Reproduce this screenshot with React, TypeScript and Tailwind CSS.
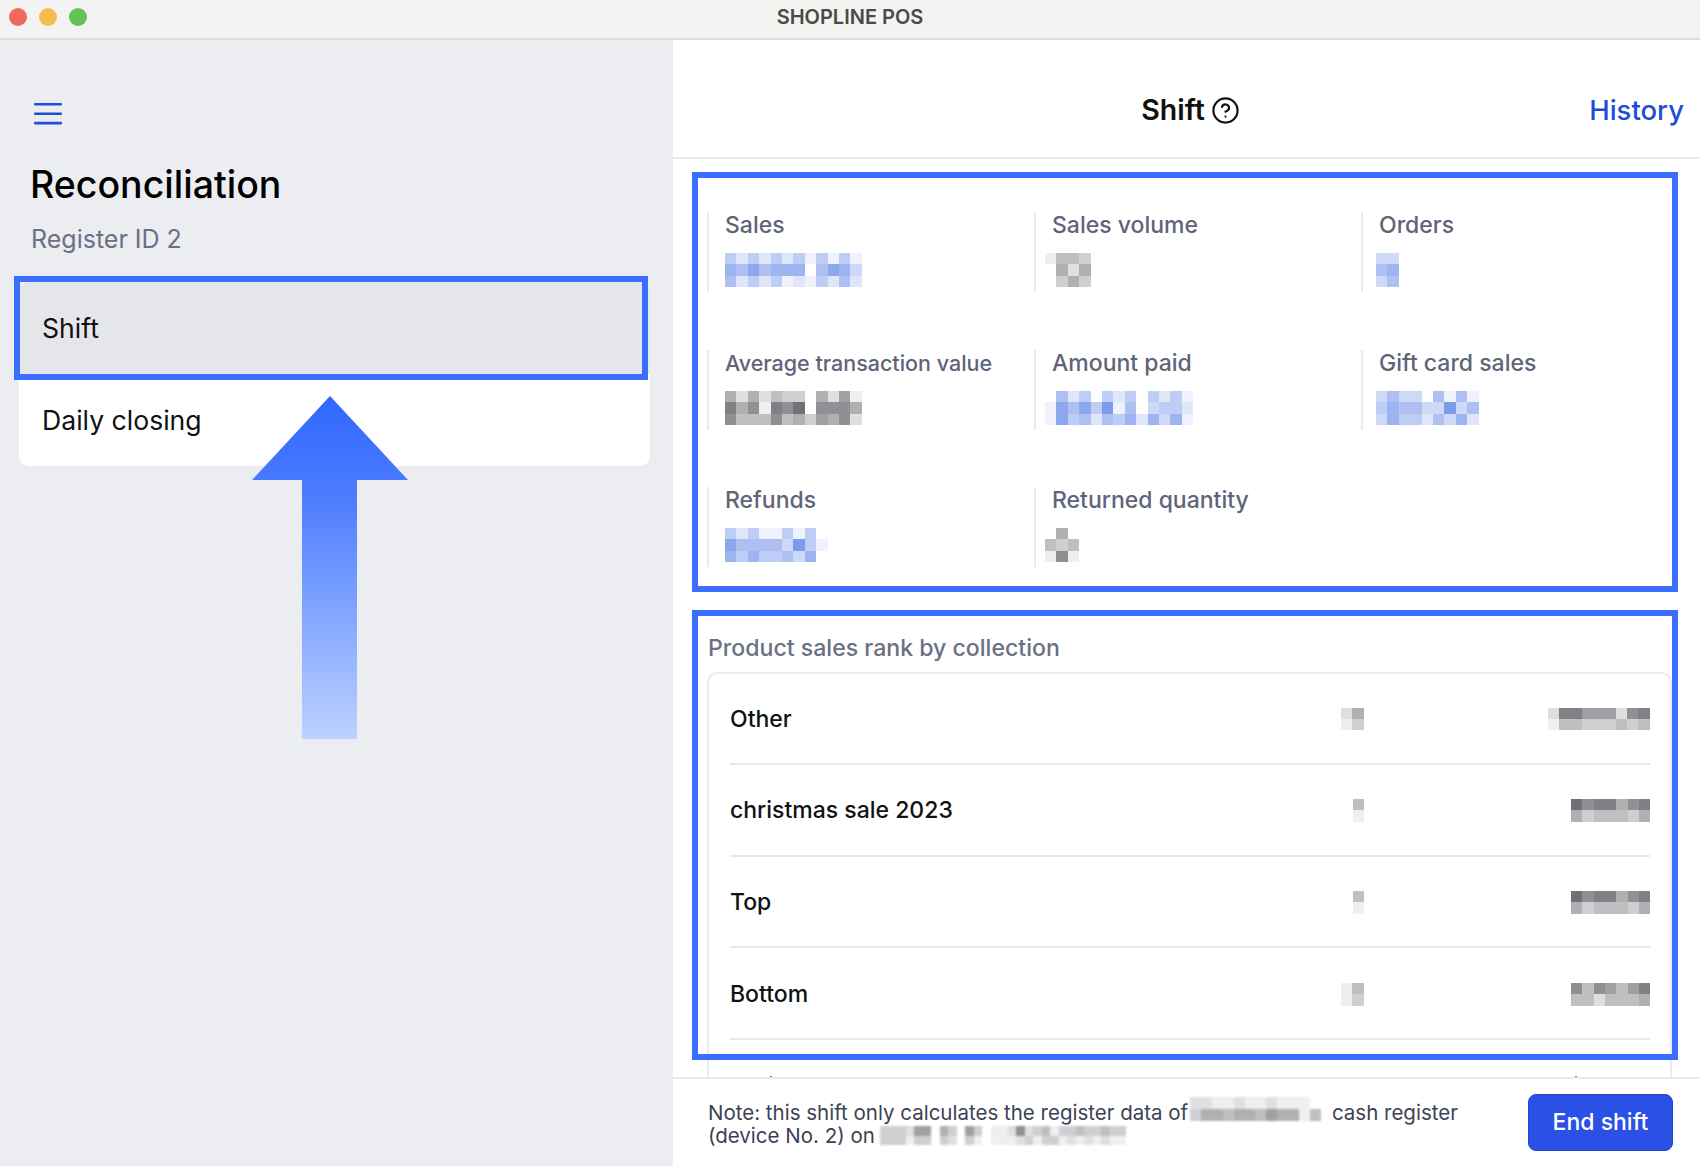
import { CircleHelp } from "lucide-react";

const ramps = {
  blue: [109, 142, 232],
  gray: [112, 112, 118],
};

type MosaicProps = {
  rows: string[];
  tone?: "blue" | "gray";
  cell?: number;
  cellH?: number;
  className?: string;
};

// pixelated block that hides a value in the screenshot
function Mosaic({ rows, tone = "gray", cell = 11.4, cellH, className = "" }: MosaicProps) {
  const [r, g, b] = ramps[tone];
  const h = cellH ?? cell;
  const mix = (c: number, d: number) => Math.round(255 - ((255 - c) * d) / 9);
  return (
    <svg
      width={rows[0].length * cell}
      height={rows.length * h}
      className={`shrink-0 blur-[0.4px] ${className}`}
      shapeRendering="crispEdges"
    >
      {rows.map((row, y) =>
        row.split("").map((d, x) => (
          <rect
            key={`${x}-${y}`}
            x={x * cell}
            y={y * h}
            width={cell}
            height={h}
            fill={`rgb(${mix(r, +d)},${mix(g, +d)},${mix(b, +d)})`}
          />
        ))
      )}
    </svg>
  );
}

type Stat = { label: string; rows: string[]; tone: "blue" | "gray"; shift: string; size?: string };

const stats: Stat[] = [
  { label: "Sales", tone: "blue", shift: "", rows: ["424242414141", "657566605763", "524241214252"] },
  { label: "Sales volume", tone: "gray", shift: "-ml-[7px]", rows: ["1443", "0525", "0353"] },
  { label: "Orders", tone: "blue", shift: "-ml-[3px]", rows: ["33", "56", "35"] },
  {
    label: "Average transaction value",
    tone: "gray",
    shift: "",
    size: "text-[21.5px]",
    rows: ["525243305261", "857187907775", "744474536572"],
  },
  { label: "Amount paid", tone: "blue", shift: "-ml-[7px]", rows: ["0524042404241", "1757481503442", "1745254626361"] },
  { label: "Gift card sales", tone: "blue", shift: "-ml-[3px]", rows: ["353305151", "465533835", "364425362"] },
  { label: "Refunds", tone: "blue", shift: "", rows: ["424114140", "755553841", "646445360"] },
  { label: "Returned quantity", tone: "gray", shift: "-ml-[7px]", rows: ["050", "434", "171"] },
];

const collections = [
  { name: "Other", qty: ["25", "13"], amount: ["288666278", "144333434"] },
  { name: "christmas sale 2023", qty: ["4", "1"], amount: ["9788578", "5344435"] },
  { name: "Top", qty: ["4", "1"], amount: ["9788578", "5344435"] },
  { name: "Bottom", qty: ["14", "13"], amount: ["7476468", "4424445"] },
];

export default function App() {
  return (
    <div className="relative flex h-[1166px] w-[1700px] flex-col overflow-hidden bg-white font-['Inter',sans-serif]">
      <div className="relative flex h-[40px] shrink-0 items-center justify-center border-b-2 border-[#dcdcdc] bg-[#f3f3f1] pb-[4px]">
        <div className="absolute left-[9px] top-[8px] flex gap-[12px]">
          <span className="h-[18px] w-[18px] rounded-full bg-[#ee6a5f]" />
          <span className="h-[18px] w-[18px] rounded-full bg-[#f5bd4f]" />
          <span className="h-[18px] w-[18px] rounded-full bg-[#61c454]" />
        </div>
        <span className="text-[20px] font-semibold text-[#4a4a4a]">SHOPLINE POS</span>
      </div>

      <div className="flex min-h-0 flex-1">
        <aside className="w-[673px] shrink-0 bg-[#ecedf1]">
          <svg width="28" height="22" viewBox="0 0 28 22" className="ml-[34px] mt-[63px] text-[#1d4ed8]">
            <rect y="0" width="28" height="2.6" rx="1" fill="currentColor" />
            <rect y="9.4" width="28" height="2.6" rx="1" fill="currentColor" />
            <rect y="18.8" width="28" height="2.6" rx="1" fill="currentColor" />
          </svg>
          <h1 className="ml-[30px] mt-[37px] text-[37.5px] font-medium leading-[46px] text-black">Reconciliation</h1>
          <p className="ml-[31px] mt-[16px] text-[25px] leading-[30px] text-[#6b7085]">Register ID 2</p>
          <div className="ml-[19px] mt-[28px] w-[631px] overflow-hidden rounded-[10px] bg-white text-[26.6px] text-[#111]">
            <div className="flex h-[92px] items-center bg-[#e5e6ea] pl-[23px] pt-[1px]">Shift</div>
            <div className="flex h-[92px] items-center pl-[23px] pt-[1px]">Daily closing</div>
          </div>
        </aside>

        <main className="flex min-w-0 flex-1 flex-col">
          <header className="flex h-[119px] shrink-0 items-center border-b-2 border-[#ebebee] pl-[24px] pr-[16px] pt-[24px]">
            <div className="flex-1" />
            <div className="flex items-center gap-[6px]">
              <span className="text-[28.5px] font-semibold text-[#111]">Shift</span>
              <CircleHelp size={29} strokeWidth={1.8} className="text-[#111]" />
            </div>
            <div className="flex flex-1 justify-end">
              <span className="text-[27.5px] font-medium text-[#1d4ed8]">History</span>
            </div>
          </header>

          <div className="min-h-0 flex-1 overflow-hidden pl-[34px] pt-[53px]">
            <div className="grid grid-cols-[327px_327px_327px] gap-y-[57.5px]">
              {stats.map((s) => (
                <div key={s.label} className="h-[80px] border-l-2 border-[#ebebee] pl-[16px]">
                  <div className={`${s.size ?? "text-[23px]"} font-medium leading-[26px] text-[#5f6478]`}>{s.label}</div>
                  <Mosaic rows={s.rows} tone={s.tone} className={`mt-[15px] ${s.shift}`} />
                </div>
              ))}
            </div>

            <div className="ml-px mt-[68px] text-[23.1px] font-medium leading-[26px] text-[#6b7085]">
              Product sales rank by collection
            </div>
            <div className="mt-[11px] mr-[28px] h-[500px] rounded-[10px] border-2 border-[#ebebee] pl-[21px] pr-[20px]">
              <div className="-mt-px">
                {collections.map((c) => (
                  <div key={c.name} className="flex h-[91.8px] items-center border-b-2 border-[#e8e8ec] pt-[2px]">
                    <span className="flex-1 text-[23px] font-medium text-[#111]">{c.name}</span>
                    <Mosaic rows={c.qty} cell={11.3} />
                    <div className="flex w-[286px] justify-end">
                      <Mosaic rows={c.amount} cell={11.3} />
                    </div>
                  </div>
                ))}
              </div>
              {/* top of the next row, almost fully scrolled out */}
              <div className="mt-[36px] flex">
                <span className="ml-[40px] h-[2px] w-[2px] bg-[#777]" />
                <span className="ml-[803px] h-[2px] w-[2px] bg-[#777]" />
              </div>
            </div>
          </div>

          <footer className="relative flex h-[89px] shrink-0 items-center border-t-2 border-[#ebebee] bg-white pl-[35px] pr-[27px]">
            <div className="flex-1 pt-[2px] text-[20.5px] leading-[23px] text-[#3b4256]">
              <div className="flex h-[23px] items-center">
                <span>Note: this shift only calculates the register data of</span>
                <Mosaic
                  rows={["2211211211100", "3554554655140"]}
                  cell={10.9}
                  cellH={12}
                  className="-translate-y-[3px] ml-[2px] blur-[0.8px]"
                />
                <span>cash register</span>
              </div>
              <div className="flex h-[23px] items-center">
                <span>(device No. 2) on</span>
                <Mosaic
                  rows={["33326605306301127234133433433", "33313303203101112313312121211"]}
                  cell={8.5}
                  cellH={9.5}
                  className="ml-[5px] blur-[0.8px]"
                />
              </div>
            </div>
            <button className="h-[57px] w-[145px] rounded-[8px] border border-[#2148d0] bg-[#2a50e5] text-[23px] font-medium text-white">
              End shift
            </button>
          </footer>
        </main>
      </div>

      {/* annotation layer drawn on top of the screenshot */}
      <div className="absolute left-[14px] top-[276px] h-[104px] w-[634px] border-[6px] border-[#3b6dfe]" />
      <div className="absolute left-[692px] top-[172px] h-[420px] w-[986px] border-[6px] border-[#3b6dfe]" />
      <div className="absolute left-[692px] top-[610px] h-[450px] w-[986px] border-[6px] border-[#3b6dfe]" />
      <svg width="156" height="344" viewBox="0 0 156 344" className="absolute left-[252px] top-[396px] blur-[0.5px]">
        <defs>
          <linearGradient id="arrowFill" x1="0" y1="0" x2="0" y2="1">
            <stop offset="0" stopColor="#3067fe" />
            <stop offset="0.3" stopColor="#4d7dff" />
            <stop offset="1" stopColor="#bcd2ff" />
          </linearGradient>
        </defs>
        <polygon points="78,0 156,84 105,84 105,343 50,343 50,84 0,84" fill="url(#arrowFill)" />
      </svg>
    </div>
  );
}
